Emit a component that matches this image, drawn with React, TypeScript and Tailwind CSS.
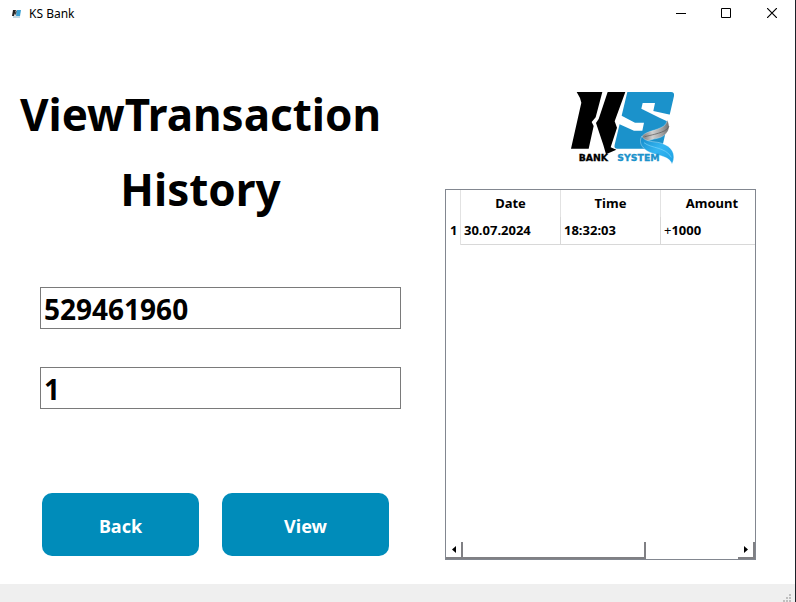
import React from 'react';

function Logo() {
  return (
    <svg width="106" height="75" viewBox="30 30 318 225" role="img" aria-label="KS Bank System">
      <defs>
        <linearGradient id="silver" x1="0" x2="1">
          <stop offset="0" stopColor="#6c6c6c" />
          <stop offset="0.4" stopColor="#cfcfcf" />
          <stop offset="0.75" stopColor="#a0a0a0" />
          <stop offset="1" stopColor="#707070" />
        </linearGradient>
        <linearGradient id="sky" x1="0" x2="1" y2="1">
          <stop offset="0" stopColor="#1288c8" />
          <stop offset="0.5" stopColor="#35b6f2" />
          <stop offset="1" stopColor="#1ba0e2" />
        </linearGradient>
      </defs>
      <path d="M50 36H127L107 112L95 126L101 138L86 206H33L64 68L60 54Z" fill="#000" />
      <path d="M143 36H196L164 124L171 143L152 202L169 209L138 223L130 195L108 129L116 117Z" fill="#000" />
      <path d="M202 36H333Q344 36 342 48L308 196Q305 206 294 206H172Q161 206 164 194Z" fill="#1b92cb" />
      <path d="M248 69H285L280 93L331 104H348L326 126L300 114L244 86Z" fill="#fff" />
      <path d="M182 106L225 128H252L247 152H222L172 130Z" fill="#fff" />
      <path d="M321 119C336 145 322 167 292 175C268 180 256 184 250 194C232 168 256 158 284 150C306 143 321 136 321 119Z" fill="url(#silver)" stroke="#fff" strokeWidth="1" />
      <path d="M327 138C322 154 298 160 254 170" fill="none" stroke="#555" strokeWidth="2" />
      <path d="M246 168C250 180 266 184 286 186C324 190 354 214 336 252C332 236 312 229 284 222C252 213 232 192 246 168Z" fill="url(#sky)" stroke="#fff" strokeWidth="1" />
      <path d="M252 188C274 206 316 200 334 232" fill="none" stroke="#7fd4fb" strokeWidth="2" />
      <g fontWeight="700" strokeWidth="1" className="font-['DejaVu_Sans',sans-serif]">
        <text x="56" y="243" fontSize="28" stroke="#000">BANK</text>
        <text x="172" y="243" fontSize="28" fill="#1b92cb" stroke="#1b92cb">SYSTEM</text>
      </g>
    </svg>
  );
}

function AppIcon() {
  return (
    <svg width="9" height="8" viewBox="0 0 9 8" aria-hidden="true">
      <path d="M1 0H4L2 6H0ZM3 3L5 0L4 6Z" fill="#222" />
      <path d="M5 0H9L8 6H4Z" fill="#3a9fd2" />
      <path d="M1 7H8" stroke="#8bb5cb" />
    </svg>
  );
}

function TitleBar() {
  return (
    <header className="flex h-7 shrink-0 items-center">
      <div className="flex grow items-center gap-2 pl-3">
        <AppIcon />
        <span className="text-xs">KS Bank</span>
      </div>
      <button aria-label="Minimize" className="flex h-7 w-[45px] items-center justify-center">
        <svg width="10" height="10" viewBox="0 0 10 10"><path d="M0 4.5H10" stroke="#000" /></svg>
      </button>
      <button aria-label="Maximize" className="flex h-7 w-[46px] items-center justify-center pb-0.5">
        <svg width="10" height="10" viewBox="0 0 10 10"><path d="M.5 .5H9.5V9.5H.5Z" fill="none" stroke="#000" /></svg>
      </button>
      <button aria-label="Close" className="flex h-7 w-[46px] items-center justify-center pb-0.5">
        <svg width="10" height="10" viewBox="0 0 10 10"><path d="M0 0L10 10M10 0L0 10" stroke="#000" strokeWidth="1.2" /></svg>
      </button>
    </header>
  );
}

function ScrollBar() {
  return (
    <div className="flex h-[17px] shrink-0">
      <button aria-label="Scroll left" className="flex w-[17px] items-center justify-center border-r-2 border-b-2 border-[#808084]">
        <svg width="4" height="7" viewBox="0 0 4 7"><path d="M4 0V7L0 3.5Z" /></svg>
      </button>
      <div className="flex grow">
        <div className="w-2/3 border-r-2 border-b-2 border-[#808084]" />
      </div>
      <button aria-label="Scroll right" className="flex w-[17px] items-center justify-center border-r-2 border-b-2 border-[#808084]">
        <svg width="4" height="7" viewBox="0 0 4 7"><path d="M0 0V7L4 3.5Z" /></svg>
      </button>
    </div>
  );
}

function Transactions() {
  return (
    <div className="flex h-[371px] flex-col overflow-hidden border border-[#828790]">
      <div className="grow overflow-hidden">
        <table className="w-full table-fixed border-separate border-spacing-0 text-[13px] font-bold">
          <colgroup>
            <col className="w-[15px]" />
            <col className="w-[100px]" />
            <col className="w-[100px]" />
            <col />
          </colgroup>
          <thead>
            <tr className="h-[27px]">
              <th className="border-r border-[#e2e2e2] p-0" />
              <th className="border-r border-[#e2e2e2] p-0">Date</th>
              <th className="border-r border-[#e2e2e2] p-0">Time</th>
              <th className="p-0 pl-2">Amount</th>
            </tr>
          </thead>
          <tbody>
            <tr className="h-7">
              <th className="border-r border-[#e2e2e2] p-0 pl-1 text-left">1</th>
              <td className="border-r border-b border-[#d8d8d8] p-0 pl-[3px]">30.07.2024</td>
              <td className="border-r border-b border-[#d8d8d8] p-0 pl-[3px]">18:32:03</td>
              <td className="border-b border-[#d8d8d8] p-0 pl-[3px]"><span className="font-normal">+</span>1000</td>
            </tr>
          </tbody>
        </table>
      </div>
      <ScrollBar />
    </div>
  );
}

const field = 'h-[42px] w-full border border-[#7a7a7a] px-[3px] pt-0.5 text-[28px] font-bold outline-none';
const action = 'h-[63px] rounded-[10px] bg-[#008cba] pt-0.5 text-lg font-bold text-white';

export default function App() {
  return (
    <div className="flex min-h-screen flex-col border-r border-[#1c2128] bg-white font-['Noto_Sans','Open_Sans',sans-serif] text-black">
      <TitleBar />
      <main className="grid grow grid-cols-[401fr_311fr] gap-11 pr-[39px] pb-6">
        <section className="flex flex-col">
          <h1 className="pt-[49px] text-center text-[44px] leading-[75px] font-bold">
            ViewTransaction
            <br />
            History
          </h1>
          <form className="flex flex-col pt-[60px] pl-10" onSubmit={(e) => e.preventDefault()}>
            <input aria-label="Account number" defaultValue="529461960" className={field} />
            <input aria-label="Transaction" defaultValue="1" className={field + ' mt-[38px]'} />
            <div className="mt-[84px] flex gap-[23px] pr-3 pl-[2px]">
              <button type="button" className={action + ' grow-[157] basis-0'}>Back</button>
              <button type="submit" className={action + ' grow-[167] basis-0'}>View</button>
            </div>
          </form>
        </section>
        <section className="flex flex-col">
          <div className="flex justify-center pt-[62px] pb-6 pl-11">
            <Logo />
          </div>
          <Transactions />
        </section>
      </main>
      <footer className="flex h-[18px] shrink-0 items-end justify-end bg-[#efefef] pr-1">
        <svg width="8" height="8" viewBox="0 0 8 8" aria-hidden="true">
          <path d="M6 0H8V2H6ZM3 3H5V5H3ZM6 3H8V5H6ZM0 6H2V8H0ZM3 6H5V8H3ZM6 6H8V8H6Z" fill="#bfbfbf" />
        </svg>
      </footer>
    </div>
  );
}
